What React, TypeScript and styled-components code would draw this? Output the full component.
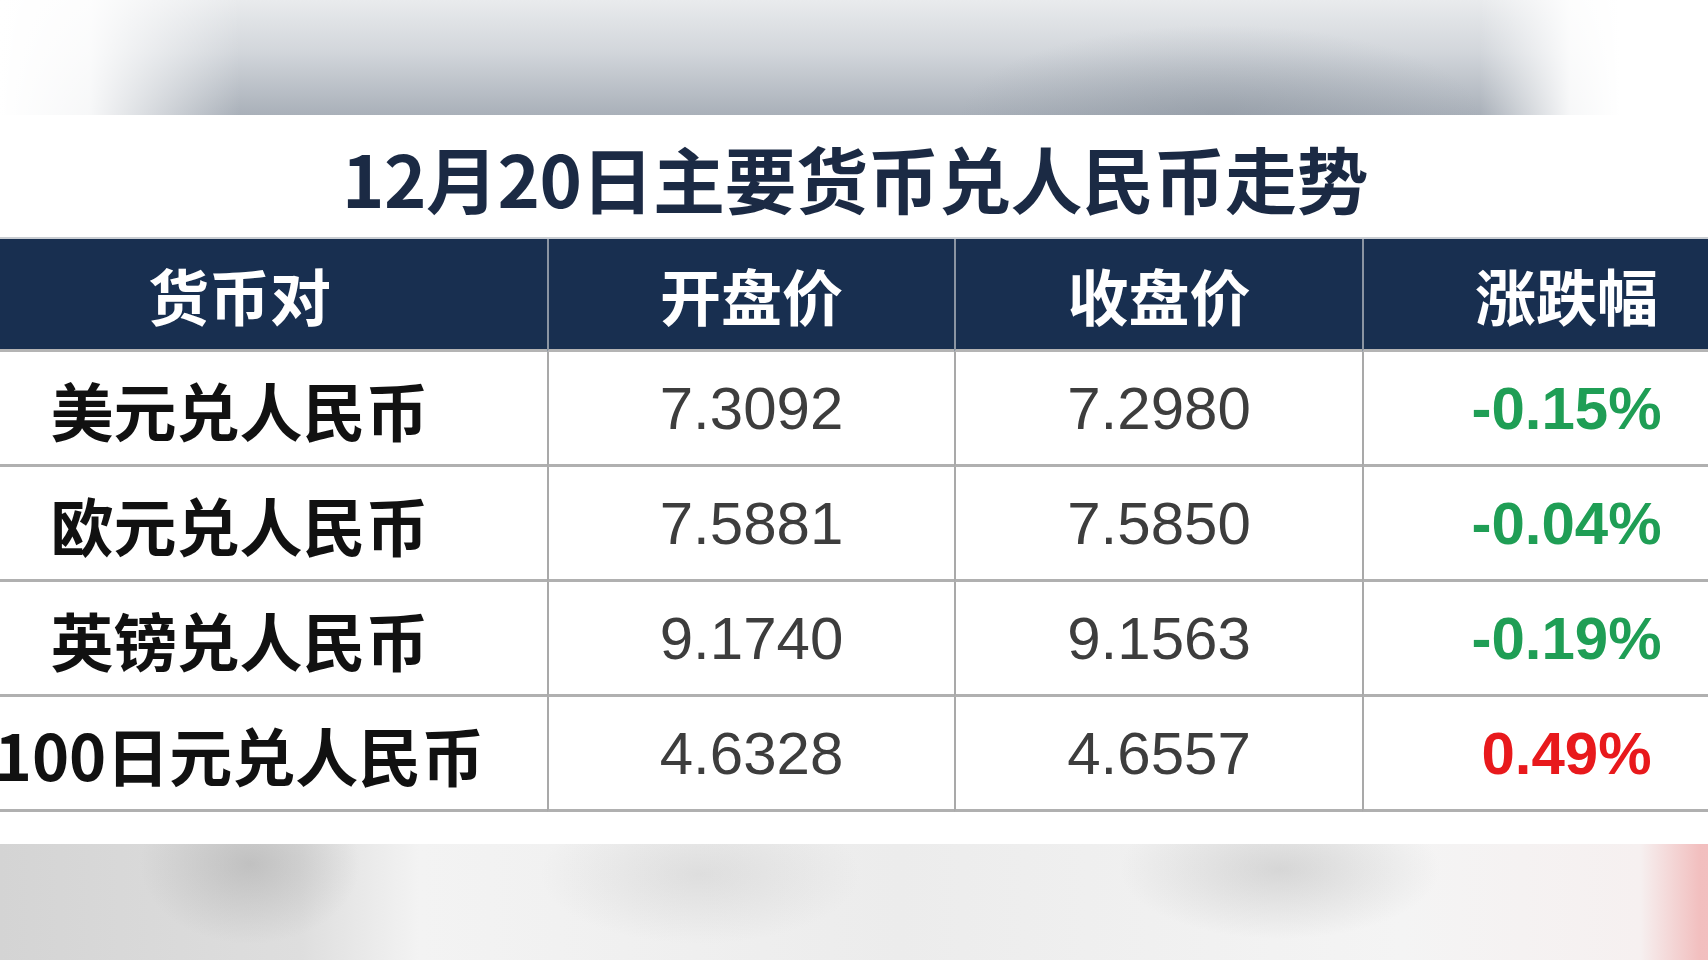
import styled, { createGlobalStyle } from "styled-components";

const GlobalStyle = createGlobalStyle`
  html, body {
    margin: 0;
    padding: 0;
    background: #ffffff;
    overflow: hidden;
  }
  body {
    font-family: "Liberation Sans", "Noto Sans CJK SC", sans-serif;
  }
`;

const Page = styled.div`
  width: 1708px;
  height: 960px;
  display: flex;
  flex-direction: column;
  overflow: hidden;
`;

const TopBand = styled.div`
  height: 115px;
  flex-shrink: 0;
  background:
    linear-gradient(
      90deg,
      #ffffff 0px,
      rgba(255, 255, 255, 0.9) 90px,
      rgba(255, 255, 255, 0) 240px,
      rgba(255, 255, 255, 0) 1480px,
      rgba(255, 255, 255, 0.9) 1570px,
      #ffffff 1620px
    ),
    radial-gradient(ellipse 260px 90px at 1220px 115px, rgba(120, 130, 142, 0.35), rgba(120, 130, 142, 0)),
    linear-gradient(180deg, #e9ebed 0%, #d2d6db 45%, #a9b0b9 100%);
`;

const Card = styled.div`
  height: 729px;
  flex-shrink: 0;
  background: #ffffff;
  display: flex;
  flex-direction: column;
`;

const Title = styled.h1`
  margin: 0;
  height: 122px;
  display: flex;
  align-items: center;
  justify-content: center;
  padding-left: 2px;
  font-family: "Noto Sans CJK SC", "Liberation Sans", sans-serif;
  font-weight: 700;
  font-size: 72px;
  letter-spacing: -0.5px;
  color: #1b2a44;
`;

const Table = styled.div`
  display: grid;
  grid-template-columns: 615px 407px 408px 407px;
  margin-left: -68px;
  width: 1837px;
  border-top: 2px solid #c9cdd2;
`;

const HeadCell = styled.div`
  height: 110px;
  display: flex;
  align-items: center;
  justify-content: center;
  background: #182f50;
  border-left: 2px solid #8a94a2;
  border-bottom: 3px solid #b4b4b4;
  font-family: "Noto Sans CJK SC", sans-serif;
  font-weight: 700;
  font-size: 61px;
  color: #ffffff;
  &:first-child {
    border-left: none;
  }
`;

const Cell = styled.div<{ $first?: boolean }>`
  height: 112px;
  display: flex;
  align-items: center;
  justify-content: center;
  background: #ffffff;
  border-left: ${(p) => (p.$first ? "none" : "2px solid #a9a9a9")};
  border-bottom: 3px solid #b0b0b0;
`;

const Pair = styled.span`
  font-family: "Noto Sans CJK SC", sans-serif;
  font-weight: 700;
  font-size: 63px;
  color: #111111;
`;

const Price = styled.span`
  font-family: "Liberation Sans", sans-serif;
  font-size: 60px;
  color: #3d3d3d;
`;

const Change = styled.span<{ $up: boolean }>`
  font-family: "Liberation Sans", sans-serif;
  font-weight: 700;
  font-size: 60px;
  color: ${(p) => (p.$up ? "#e8191c" : "#1f9e55")};
`;

const BottomBand = styled.div`
  margin-top: auto;
  height: 116px;
  flex-shrink: 0;
  background:
    linear-gradient(90deg, rgba(240, 160, 160, 0) 1640px, rgba(240, 170, 170, 0.7) 1700px),
    radial-gradient(ellipse 110px 80px at 250px 20px, rgba(170, 170, 170, 0.55), rgba(170, 170, 170, 0)),
    radial-gradient(ellipse 160px 70px at 700px 30px, rgba(190, 190, 190, 0.35), rgba(190, 190, 190, 0)),
    radial-gradient(ellipse 160px 70px at 1280px 25px, rgba(180, 180, 180, 0.45), rgba(180, 180, 180, 0)),
    linear-gradient(90deg, #d4d4d4 0px, #dedede 300px, #f3f3f3 420px, #ececec 900px, #f4f4f4 1400px, #f6f0f0 1640px);
`;

const headers = ["货币对", "开盘价", "收盘价", "涨跌幅"];

const rows = [
  { pair: "美元兑人民币", open: "7.3092", close: "7.2980", change: "-0.15%" },
  { pair: "欧元兑人民币", open: "7.5881", close: "7.5850", change: "-0.04%" },
  { pair: "英镑兑人民币", open: "9.1740", close: "9.1563", change: "-0.19%" },
  { pair: "100日元兑人民币", open: "4.6328", close: "4.6557", change: "0.49%" },
];

export default function App() {
  return (
    <Page>
      <GlobalStyle />
      <TopBand />
      <Card>
        <Title>12月20日主要货币兑人民币走势</Title>
        <Table>
          {headers.map((h) => (
            <HeadCell key={h}>{h}</HeadCell>
          ))}
          {rows.map((r) => (
            <>
              <Cell $first key={r.pair}>
                <Pair>{r.pair}</Pair>
              </Cell>
              <Cell>
                <Price>{r.open}</Price>
              </Cell>
              <Cell>
                <Price>{r.close}</Price>
              </Cell>
              <Cell>
                <Change $up={!r.change.startsWith("-")}>{r.change}</Change>
              </Cell>
            </>
          ))}
        </Table>
      </Card>
      <BottomBand />
    </Page>
  );
}
